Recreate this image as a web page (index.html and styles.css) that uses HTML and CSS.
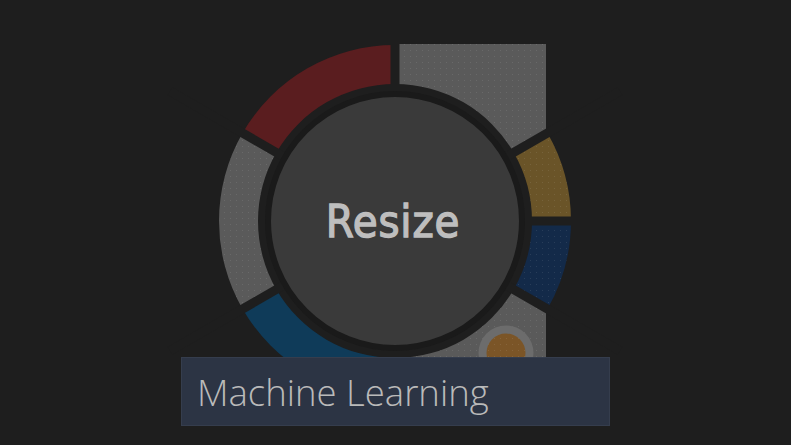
FILE: index.html
```
<!DOCTYPE html>
<html lang="en">
<head>
<meta charset="utf-8">
<title>Pie menu</title>
<link rel="stylesheet" href="styles.css">
</head>
<body>
<div class="stage">
  <svg class="pie" width="791" height="445" viewBox="0 0 791 445" xmlns="http://www.w3.org/2000/svg">
    <defs>
      <pattern id="dots" width="6" height="6" patternUnits="userSpaceOnUse">
        <rect x="2" y="2" width="1" height="1" fill="#ffffff" fill-opacity="0.09"/>
      </pattern>
    </defs>
    <g class="segments">
      <path class="seg red" d="M395,45 A176,176 0 0 0 242.58,133 L276.36,152.5 A137,137 0 0 1 395,84 Z"/>
      <path class="seg gray" d="M242.58,133 A176,176 0 0 0 242.58,309 L276.36,289.5 A137,137 0 0 1 276.36,152.5 Z"/>
      <path class="seg bluebl" d="M242.58,309 A176,176 0 0 0 395,397 L395,358 A137,137 0 0 1 276.36,289.5 Z"/>
      <path class="seg blueright" d="M547.42,309 A176,176 0 0 0 571,221 L532,221 A137,137 0 0 1 513.64,289.5 Z"/>
      <path class="seg yellow" d="M571,221 A176,176 0 0 0 547.42,133 L513.64,152.5 A137,137 0 0 1 532,221 Z"/>
      <path class="seg gray" d="M395,84 L395,44 L546,44 L546,133.8 L513.64,152.5 A137,137 0 0 0 395,84 Z"/>
      <path class="seg gray" d="M395,358 L395,420 L546,420 L546,308.2 L513.64,289.5 A137,137 0 0 1 395,358 Z"/>
      <path class="dots" d="M242.58,133 A176,176 0 0 0 242.58,309 L276.36,289.5 A137,137 0 0 1 276.36,152.5 Z"/>
      <path class="dots" d="M395,84 L395,44 L546,44 L546,133.8 L513.64,152.5 A137,137 0 0 0 395,84 Z"/>
      <path class="dots" d="M395,358 L395,420 L546,420 L546,308.2 L513.64,289.5 A137,137 0 0 1 395,358 Z"/>
      <path class="dots" d="M547.42,309 A176,176 0 0 0 571,221 L532,221 A137,137 0 0 1 513.64,289.5 Z"/>
      <path class="dots" d="M571,221 A176,176 0 0 0 547.42,133 L513.64,152.5 A137,137 0 0 1 532,221 Z"/>
    </g>
    <g class="gaps">
      <line x1="395" y1="221" x2="600" y2="221"/>
      <line x1="395" y1="221" x2="620" y2="91.1"/>
      <line x1="395" y1="221" x2="395" y2="20"/>
      <line x1="395" y1="221" x2="170" y2="91.1"/>
      <line x1="395" y1="221" x2="170" y2="350.9"/>
      <line x1="395" y1="221" x2="395" y2="430"/>
      <line x1="395" y1="221" x2="620" y2="350.9"/>
    </g>
    <circle class="halo" cx="506" cy="353" r="27.5"/>
    <circle class="knob" cx="506" cy="353" r="19.5"/>
    <circle class="knob-dots" cx="506" cy="353" r="19.5"/>
    <circle class="hub" cx="395" cy="221" r="127"/>
    <text class="hub-label" x="393" y="237">Resize</text>
  </svg>
  <div class="label">Machine Learning</div>
</div>
</body>
</html>
```
FILE: styles.css
```
html, body {
  margin: 0;
  padding: 0;
  background: #1e1e1e;
}
.stage {
  position: relative;
  width: 791px;
  height: 445px;
  overflow: hidden;
}
.pie {
  display: block;
}
.seg.red { fill: #5a1d1f; }
.seg.gray { fill: #5a5a5a; }
.seg.bluebl { fill: #0f3b59; }
.seg.blueright { fill: #132a49; }
.seg.yellow { fill: #6a5428; }
.dots { fill: url(#dots); }
.gaps line {
  stroke: #1e1e1e;
  stroke-width: 9;
}
.halo { fill: #6c6c6c; }
.knob { fill: #7b5527; }
.knob-dots { fill: url(#dots); }
.hub {
  fill: #3a3a3a;
  stroke: #1a1a1a;
  stroke-width: 6;
}
.hub-label {
  font-family: "DejaVu Sans Condensed", "DejaVu Sans", sans-serif;
  font-size: 45px;
  font-weight: normal;
  fill: #bebebe;
  stroke: #bebebe;
  stroke-width: 1.3;
  text-anchor: middle;
  letter-spacing: 0.8px;
}
.label {
  position: absolute;
  left: 181px;
  top: 357px;
  width: 429px;
  height: 69px;
  box-sizing: border-box;
  background: #2c3444;
  border: 1px solid #353d4d;
  color: #bababa;
  font-family: "Open Sans", sans-serif;
  font-weight: 300;
  font-size: 36.5px;
  line-height: 1;
  padding: 16px 0 0 15px;
}
```
